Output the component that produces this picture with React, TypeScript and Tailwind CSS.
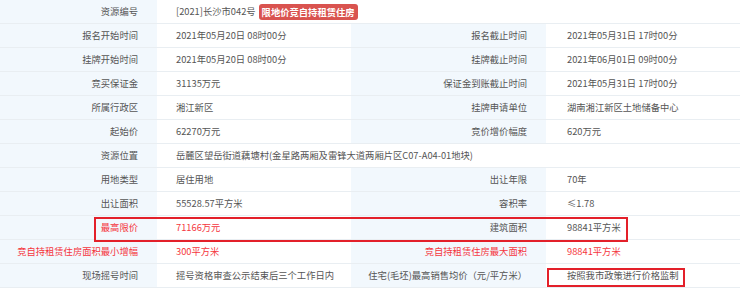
import React from "react";

type Cell = { text: React.ReactNode; red?: boolean };
type Row =
  | { kind: "wide"; label: string; value: React.ReactNode }
  | { kind: "pair"; l1: Cell; v1: Cell; l2: Cell; v2: Cell };

const rows: Row[] = [
  {
    kind: "wide",
    label: "资源编号",
    value: (
      <span className="flex items-center">
        <span>[2021]长沙市042号</span>
        <span className="ml-[3px] rounded-[3px] bg-[#d9534f] px-[3px] py-[2px] font-bold leading-[12px] text-white">
          限地价竞自持租赁住房
        </span>
      </span>
    ),
  },
  { kind: "pair", l1: { text: "报名开始时间" }, v1: { text: "2021年05月20日 08时00分" }, l2: { text: "报名截止时间" }, v2: { text: "2021年05月31日 17时00分" } },
  { kind: "pair", l1: { text: "挂牌开始时间" }, v1: { text: "2021年05月20日 08时00分" }, l2: { text: "挂牌截止时间" }, v2: { text: "2021年06月01日 09时00分" } },
  { kind: "pair", l1: { text: "竞买保证金" }, v1: { text: "31135万元" }, l2: { text: "保证金到账截止时间" }, v2: { text: "2021年05月31日 17时00分" } },
  { kind: "pair", l1: { text: "所属行政区" }, v1: { text: "湘江新区" }, l2: { text: "挂牌申请单位" }, v2: { text: "湖南湘江新区土地储备中心" } },
  { kind: "pair", l1: { text: "起始价" }, v1: { text: "62270万元" }, l2: { text: "竞价增价幅度" }, v2: { text: "620万元" } },
  { kind: "wide", label: "资源位置", value: "岳麓区望岳街道藕塘村(金星路两厢及雷锋大道两厢片区C07-A04-01地块)" },
  { kind: "pair", l1: { text: "用地类型" }, v1: { text: "居住用地" }, l2: { text: "出让年限" }, v2: { text: "70年" } },
  { kind: "pair", l1: { text: "出让面积" }, v1: { text: "55528.57平方米" }, l2: { text: "容积率" }, v2: { text: "≤1.78" } },
  { kind: "pair", l1: { text: "最高限价", red: true }, v1: { text: "71166万元", red: true }, l2: { text: "建筑面积" }, v2: { text: "98841平方米" } },
  { kind: "pair", l1: { text: "竞自持租赁住房面积最小增幅", red: true }, v1: { text: "300平方米", red: true }, l2: { text: "竞自持租赁住房最大面积", red: true }, v2: { text: "98841平方米", red: true } },
  { kind: "pair", l1: { text: "现场摇号时间" }, v1: { text: "摇号资格审查公示结束后三个工作日内" }, l2: { text: "住宅(毛坯)最高销售均价（元/平方米）" }, v2: { text: "按照我市政策进行价格监制" } },
];

const labelCls =
  "flex h-6 items-center justify-end whitespace-nowrap border-b border-[#e9eef2] bg-[#f2f8fd] pr-[19px]";
const valueCls =
  "flex h-6 items-center whitespace-nowrap border-b border-[#e9eef2] bg-white";

function color(c: Cell) {
  return c.red ? "text-[#f5363d]" : "text-[#555555]";
}

export default function App() {
  return (
    <div
      className="relative h-[288px] w-[740px] overflow-hidden bg-white text-[9.3px] text-[#555555]"
      style={{ fontFamily: '"Noto Sans CJK SC", "Noto Sans", sans-serif' }}
    >
      <div className="grid grid-cols-[157px_194px_195px_194px]">
        {rows.map((r, i) =>
          r.kind === "wide" ? (
            <React.Fragment key={i}>
              <div className={labelCls}>{r.label}</div>
              <div className={`${valueCls} col-span-3 pl-[19px]`}>{r.value}</div>
            </React.Fragment>
          ) : (
            <React.Fragment key={i}>
              <div className={`${labelCls} ${color(r.l1)}`}>{r.l1.text}</div>
              <div className={`${valueCls} pl-[19px] ${color(r.v1)}`}>{r.v1.text}</div>
              <div className={`${labelCls} ${color(r.l2)}`}>{r.l2.text}</div>
              <div className={`${valueCls} pl-[21px] ${color(r.v2)}`}>{r.v2.text}</div>
            </React.Fragment>
          )
        )}
      </div>
      <div className="pointer-events-none absolute left-[94px] top-[217px] h-[25px] w-[534px] border-2 border-[#e3202a]" />
      <div className="pointer-events-none absolute left-[547px] top-[268px] h-[19px] w-[138px] border-2 border-[#e3202a]" />
    </div>
  );
}
